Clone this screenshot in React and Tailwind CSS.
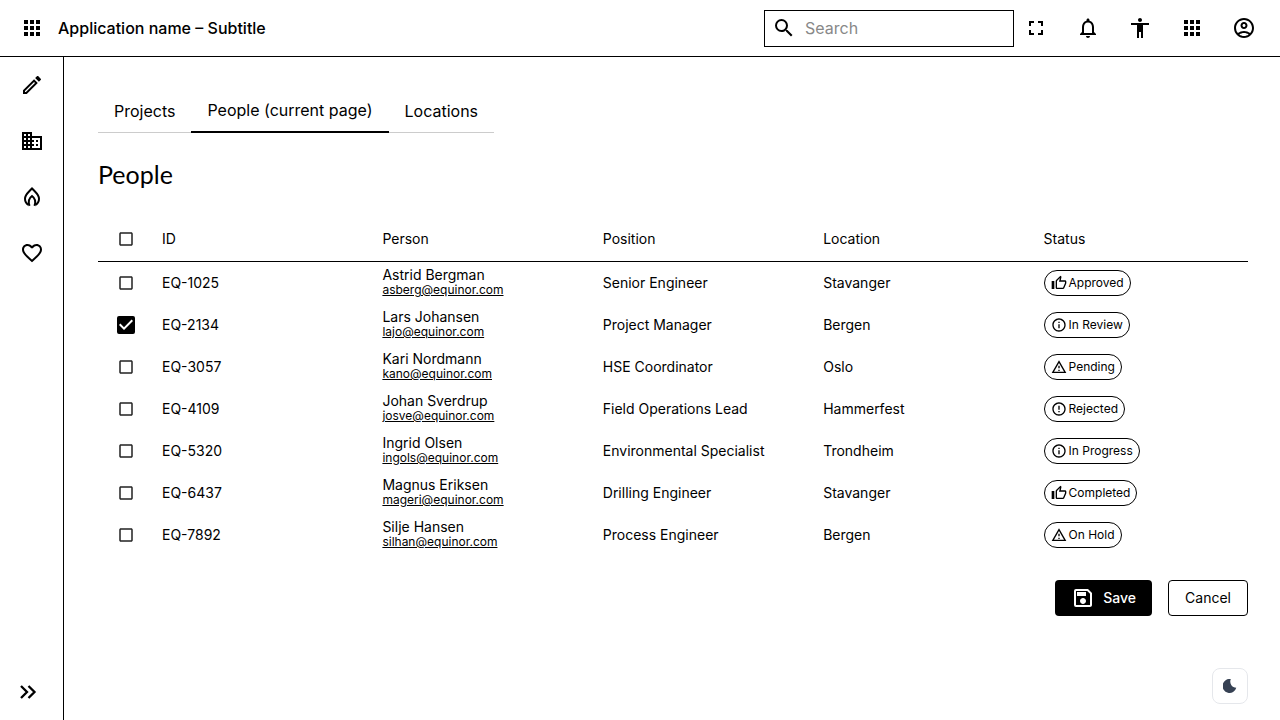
import { useState } from "react";
import {
  MdApps,
  MdSearch,
  MdFullscreen,
  MdNotificationsNone,
  MdAccessibility,
  MdOutlineAccountCircle,
  MdOutlineEdit,
  MdOutlineBusiness,
  MdFavoriteBorder,
  MdOutlineThumbUp,
  MdOutlineInfo,
  MdOutlineWarningAmber,
  MdErrorOutline,
  MdOutlineSave,
  MdCheckBox,
  MdCheckBoxOutlineBlank,
} from "react-icons/md";

const people = [
  ["EQ-1025", "Astrid Bergman", "asberg@equinor.com", "Senior Engineer", "Stavanger", "Approved"],
  ["EQ-2134", "Lars Johansen", "lajo@equinor.com", "Project Manager", "Bergen", "In Review"],
  ["EQ-3057", "Kari Nordmann", "kano@equinor.com", "HSE Coordinator", "Oslo", "Pending"],
  ["EQ-4109", "Johan Sverdrup", "josve@equinor.com", "Field Operations Lead", "Hammerfest", "Rejected"],
  ["EQ-5320", "Ingrid Olsen", "ingols@equinor.com", "Environmental Specialist", "Trondheim", "In Progress"],
  ["EQ-6437", "Magnus Eriksen", "mageri@equinor.com", "Drilling Engineer", "Stavanger", "Completed"],
  ["EQ-7892", "Silje Hansen", "silhan@equinor.com", "Process Engineer", "Bergen", "On Hold"],
];

const statusIcons = {
  Approved: MdOutlineThumbUp,
  "In Review": MdOutlineInfo,
  Pending: MdOutlineWarningAmber,
  Rejected: MdErrorOutline,
  "In Progress": MdOutlineInfo,
  Completed: MdOutlineThumbUp,
  "On Hold": MdOutlineWarningAmber,
};

function FlameIcon({ className }) {
  return (
    <svg viewBox="0 0 24 24" className={className} fill="none" stroke="currentColor" strokeWidth="2" aria-hidden="true">
      <path d="M8.5 19.8C6.300 18.500 5 16.500 5 13.7 5 9.6 8.2 7.6 12 3.4c3.8 4.2 7 6.2 7 10.3 0 2.800-1.300 4.800-3.500 6.100" />
      <path d="M9.500 20.800C8.300 17.500 8.500 13.500 12 11c3.500 2.500 3.700 6.500 2.500 9.800" />
    </svg>
  );
}

function ExpandIcon({ className }) {
  return (
    <svg viewBox="0 0 24 24" className={className} fill="none" stroke="currentColor" strokeWidth="2.3" aria-hidden="true">
      <path d="M5 6l6 6-6 6M12.5 6l6 6-6 6" />
    </svg>
  );
}

function MoonIcon({ className }) {
  return (
    <svg viewBox="0 0 14 14" className={className} fill="currentColor" aria-hidden="true">
      <path d="M7.800 0.100A7 7 0 1 0 13.300 8.800A6.200 6.200 0 0 1 7.800 0.100Z" />
    </svg>
  );
}

function IconButton({ label, icon: Icon, className }) {
  return (
    <button type="button" aria-label={label} className={"flex items-center justify-center " + className}>
      <Icon className="size-6" />
    </button>
  );
}

function Checkbox({ label, checked, onChange }) {
  const Icon = checked ? MdCheckBox : MdCheckBoxOutlineBlank;
  return (
    <label className="grid size-6 cursor-pointer place-items-center">
      <input
        type="checkbox"
        aria-label={label}
        checked={checked}
        onChange={onChange}
        className="col-start-1 row-start-1 size-4 appearance-none"
      />
      <Icon className={checked ? "col-start-1 row-start-1 size-6" : "col-start-1 row-start-1 size-[18px] text-[#222]"} />
    </label>
  );
}

function StatusChip({ status }) {
  const Icon = statusIcons[status];
  return (
    <span className="flex h-[26px] w-fit items-center gap-0.5 rounded-full border border-black px-1.5 text-xs whitespace-nowrap">
      <Icon className="size-4 shrink-0" />
      {status}
    </span>
  );
}

export default function App() {
  const [selected, setSelected] = useState(["EQ-2134"]);
  const toggle = (id) =>
    setSelected((ids) => (ids.includes(id) ? ids.filter((other) => other !== id) : [...ids, id]));
  const allSelected = selected.length === people.length;
  const toggleAll = () => setSelected(allSelected ? [] : people.map(([id]) => id));

  return (
    <div className="flex min-h-screen flex-col bg-white font-['Inter',sans-serif] text-black">
      <header className="flex items-center justify-between border-b border-black pr-4 pl-3">
        <div className="flex h-14 items-center gap-1.5">
          <IconButton label="Menu" icon={MdApps} className="size-10" />
          <span className="text-base font-medium">Application name – Subtitle</span>
        </div>
        <div className="flex items-center gap-0.5">
          <label className="flex h-[37px] w-[250px] items-center gap-[9px] border border-black px-[7px]">
            <MdSearch className="size-6 shrink-0" />
            <input
              type="search"
              aria-label="Search"
              placeholder="Search"
              className="w-full min-w-0 text-base outline-none placeholder:text-[#888]"
            />
          </label>
          <div className="flex gap-3">
            <IconButton label="Fullscreen" icon={MdFullscreen} className="size-10" />
            <IconButton label="Notifications" icon={MdNotificationsNone} className="size-10" />
            <IconButton label="Accessibility" icon={MdAccessibility} className="size-10" />
            <IconButton label="Apps" icon={MdApps} className="size-10" />
            <IconButton label="Account" icon={MdOutlineAccountCircle} className="size-10" />
          </div>
        </div>
      </header>

      <div className="flex grow">
        <nav aria-label="Main" className="flex w-16 shrink-0 flex-col border-r border-black">
          <IconButton label="Edit" icon={MdOutlineEdit} className="h-14 w-16" />
          <IconButton label="Company" icon={MdOutlineBusiness} className="h-14 w-16" />
          <IconButton label="Flame" icon={FlameIcon} className="h-14 w-16" />
          <IconButton label="Favourites" icon={MdFavoriteBorder} className="h-14 w-16" />
          <IconButton label="Expand" icon={ExpandIcon} className="mt-auto h-14 w-14" />
        </nav>

        <main className="min-w-0 grow pt-8 pr-8 pb-8 pl-[34px]">
          <div role="tablist" className="flex h-11 w-fit text-base">
            <button type="button" role="tab" aria-selected="false" className="border-b border-[#ccc] px-4">
              Projects
            </button>
            <button type="button" role="tab" aria-selected="true" className="border-b-2 border-black px-4">
              People (current page)
            </button>
            <button type="button" role="tab" aria-selected="false" className="border-b border-[#ccc] px-4">
              Locations
            </button>
          </div>

          <h1 className="mt-6 font-['Lato',sans-serif] text-[25px] leading-[34px]">People</h1>

          <table className="mt-[26px] w-full table-fixed border-separate border-spacing-0 text-left text-sm">
            <thead>
              <tr className="h-[45px]">
                <th className="w-12 border-b border-black pl-4">
                  <Checkbox label="Select all" checked={allSelected} onChange={toggleAll} />
                </th>
                <th className="border-b border-black pl-4 font-normal">ID</th>
                <th className="border-b border-black pl-4 font-normal">Person</th>
                <th className="border-b border-black pl-4 font-normal">Position</th>
                <th className="border-b border-black pl-4 font-normal">Location</th>
                <th className="border-b border-black pl-4 font-normal">Status</th>
              </tr>
            </thead>
            <tbody>
              {people.map(([id, name, email, position, location, status]) => (
                <tr key={id} className="h-[42px]">
                  <td className="pl-4">
                    <Checkbox label={"Select " + name} checked={selected.includes(id)} onChange={() => toggle(id)} />
                  </td>
                  <td className="pl-4">{id}</td>
                  <td className="pb-0.5 pl-4">
                    <div className="leading-4">{name}</div>
                    <a href={"mailto:" + email} className="block text-xs leading-[14px] underline">
                      {email}
                    </a>
                  </td>
                  <td className="pl-4">{position}</td>
                  <td className="pl-4">{location}</td>
                  <td className="pl-4">
                    <StatusChip status={status} />
                  </td>
                </tr>
              ))}
            </tbody>
          </table>

          <div className="mt-6 flex justify-end gap-4 text-sm">
            <button type="button" className="flex h-9 items-center gap-2 rounded bg-black px-4 font-medium text-white">
              <MdOutlineSave className="size-6" />
              Save
            </button>
            <button type="button" className="h-9 rounded border border-black px-4">
              Cancel
            </button>
          </div>
        </main>
      </div>

      <button
        type="button"
        aria-label="Dark mode"
        className="fixed right-8 bottom-4 flex size-9 items-center justify-center rounded-lg border border-gray-200 bg-white text-gray-700"
      >
        <MoonIcon className="size-3.5" />
      </button>
    </div>
  );
}
